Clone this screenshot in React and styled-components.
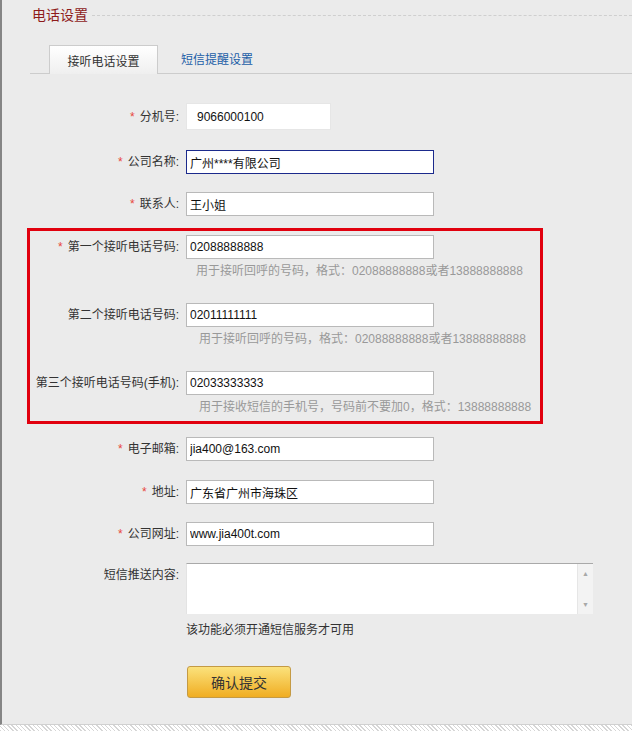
import styled, { createGlobalStyle } from "styled-components";

const GlobalStyle = createGlobalStyle`
  body {
    margin: 0;
    background: #ffffff;
    font-family: "Liberation Sans", "Noto Sans CJK SC", sans-serif;
    font-size: 12px;
    color: #333;
  }
`;

const Page = styled.div`
  width: 632px;
  height: 725px;
  box-sizing: border-box;
  border-left: 2px solid #858585;
  border-bottom: 1px solid #d0d0d0;
  background: #ebebeb;
`;

const Hatch = styled.div`
  height: 6px;
  background: repeating-linear-gradient(
    45deg,
    #d6d6d6 0 1px,
    #ffffff 1px 3px
  );
`;

const Header = styled.div`
  display: flex;
  align-items: center;
  height: 27px;
  padding-left: 30px;
  h2 {
    margin: 0;
    font-size: 14px;
    font-weight: normal;
    color: #8e1b1b;
  }
  .line {
    flex: 1;
    margin-left: 4px;
    margin-top: 3px;
    border-top: 1px dashed #cfcfcf;
  }
`;

const TabBar = styled.div`
  display: flex;
  align-items: flex-end;
  height: 28px;
  margin-top: 18px;
  margin-left: 28px;
  border-bottom: 1px solid #cccccc;
`;

const Tab = styled.div`
  display: flex;
  align-items: center;
  justify-content: center;
  box-sizing: border-box;
  height: ${(p) => (p.$active ? "29px" : "28px")};
  margin-bottom: ${(p) => (p.$active ? "-1px" : "0")};
  margin-left: ${(p) => (p.$active ? "19px" : "0")};
  width: ${(p) => (p.$active ? "109px" : "auto")};
  padding: ${(p) => (p.$active ? "0" : "0 22px 1px 23px")};
  border: ${(p) => (p.$active ? "1px solid #cccccc" : "none")};
  border-bottom: none;
  background: ${(p) =>
    p.$active ? "linear-gradient(#ffffff, #efefef)" : "transparent"};
  color: ${(p) => (p.$active ? "#333333" : "#1b5ea7")};
  font-size: 12px;
  cursor: pointer;
`;

const Form = styled.div`
  margin-top: 29px;
  display: flex;
  flex-direction: column;
`;

const Row = styled.div`
  display: flex;
  align-items: ${(p) => (p.$top ? "flex-start" : "center")};
  margin-top: ${(p) => p.$mt || 0}px;
`;

const Label = styled.label`
  width: ${(p) => p.$w || 179}px;
  flex: none;
  box-sizing: border-box;
  padding-right: 2px;
  text-align: right;
  white-space: nowrap;
  line-height: 24px;
  color: #333;
  em {
    font-style: normal;
    color: #e8473b;
    margin-right: 5px;
  }
`;

const Input = styled.input`
  box-sizing: border-box;
  margin: 0 0 0 5px;
  width: ${(p) => p.$w || 248}px;
  height: ${(p) => p.$h || 24}px;
  padding: 0 0 0 ${(p) => p.$pad || 3}px;
  border: 1px solid ${(p) => p.$border || "#b9b9b9"};
  background: #ffffff;
  font-family: "Liberation Sans", "Noto Sans CJK SC", sans-serif;
  font-size: 12px;
  color: #111;
  outline: none;
`;

const Hint = styled.div`
  margin-top: 3px;
  padding-left: ${(p) => p.$pl || 194}px;
  line-height: 18px;
  color: #999999;
  white-space: nowrap;
`;

const RedBox = styled.div`
  margin-top: 12px;
  margin-left: 25px;
  width: 516px;
  box-sizing: border-box;
  border: 3px solid #e1000e;
  padding: 4px 0 5px;
`;

const TextBox = styled.div`
  display: flex;
  margin-left: 5px;
  width: 407px;
  height: 51px;
  box-sizing: border-box;
  border-top: 1px solid #a9a9a9;
  border-left: 1px solid #e3e3e3;
  background: #ffffff;
  textarea {
    flex: 1;
    border: none;
    resize: none;
    outline: none;
    padding: 2px;
    font-family: "Liberation Sans", "Noto Sans CJK SC", sans-serif;
    font-size: 12px;
  }
`;

const ScrollTrack = styled.div`
  width: 16px;
  display: flex;
  flex-direction: column;
  justify-content: space-between;
  align-items: center;
  background: #f3f3f3;
  border-left: 1px solid #e6e6e6;
  color: #a8a8a8;
  font-size: 7px;
  line-height: 8px;
  padding: 6px 0 5px;
  box-sizing: border-box;
`;

const Actions = styled.div`
  padding-left: 184px;
  display: flex;
  flex-direction: column;
  align-items: flex-start;
`;

const Note = styled.div`
  margin-top: 7px;
  line-height: 18px;
  color: #333;
`;

const SubmitButton = styled.button`
  margin-top: 27px;
  margin-left: 1px;
  width: 104px;
  height: 32px;
  border: 1px solid #c49a44;
  border-radius: 3px;
  background: linear-gradient(#fbe27c, #f0ad22);
  font-family: "Liberation Sans", "Noto Sans CJK SC", sans-serif;
  font-size: 14px;
  color: #333;
  cursor: pointer;
`;

function Field({ label, required, value, mt, w, labelW, border, h, pad }) {
  return (
    <Row $mt={mt}>
      <Label $w={labelW}>
        {required && <em>*</em>}
        {label}:
      </Label>
      <Input defaultValue={value} $w={w} $border={border} $h={h} $pad={pad} />
    </Row>
  );
}

function App() {
  return (
    <>
      <GlobalStyle />
      <Page>
        <Header>
          <h2>电话设置</h2>
          <div className="line" />
        </Header>
        <TabBar>
          <Tab $active>接听电话设置</Tab>
          <Tab>短信提醒设置</Tab>
        </TabBar>
        <Form>
          <Field
            label="分机号"
            required
            value="9066000100"
            w={145}
            h={27}
            pad={10}
            border="#e6e6e6"
          />
          <Field label="公司名称" required value="广州****有限公司" mt={20} border="#1b2a8c" />
          <Field label="联系人" required value="王小姐" mt={18} />

          <RedBox>
            <Field label="第一个接听电话号码" required value="02088888888" labelW={151} />
            <Hint $pl={166}>用于接听回呼的号码，格式：02088888888或者13888888888</Hint>
            <Field label="第二个接听电话号码" value="02011111111" labelW={151} mt={23} />
            <Hint $pl={169}>用于接听回呼的号码，格式：02088888888或者13888888888</Hint>
            <Field label="第三个接听电话号码(手机)" value="02033333333" labelW={151} mt={23} />
            <Hint $pl={169}>用于接收短信的手机号，号码前不要加0，格式：13888888888</Hint>
          </RedBox>

          <Field label="电子邮箱" required value="jia400@163.com" mt={13} />
          <Field label="地址" required value="广东省广州市海珠区" mt={19} />
          <Field label="公司网址" required value="www.jia400t.com" mt={18} />

          <Row $mt={17} $top>
            <Label>短信推送内容:</Label>
            <TextBox>
              <textarea />
              <ScrollTrack>
                <span>▲</span>
                <span>▼</span>
              </ScrollTrack>
            </TextBox>
          </Row>

          <Actions>
            <Note>该功能必须开通短信服务才可用</Note>
            <SubmitButton>确认提交</SubmitButton>
          </Actions>
        </Form>
      </Page>
      <Hatch />
    </>
  );
}

export default App;
